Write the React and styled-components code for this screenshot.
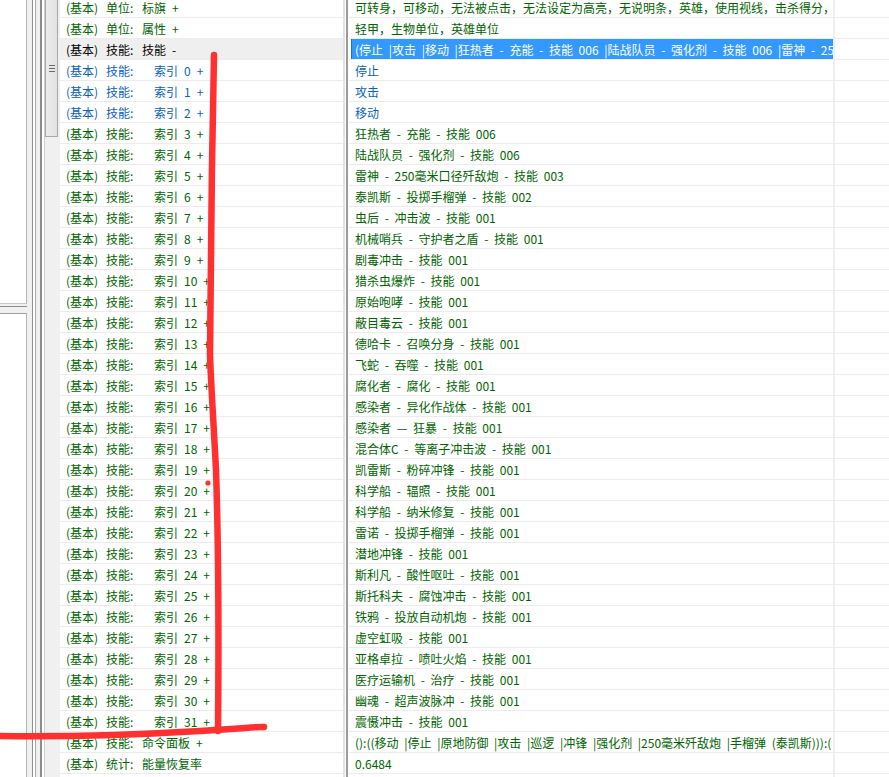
import React from 'react';
import styled, { createGlobalStyle } from 'styled-components';

const GlobalStyle = createGlobalStyle`
  html, body {
    margin: 0;
    padding: 0;
    background: #fff;
  }
  body {
    font-family: "Noto Sans CJK SC", "Noto Sans", sans-serif;
    font-size: 12px;
    overflow: hidden;
  }
`;

const tones = {
  green: '#006400',
  blue: '#0a5fc0',
  black: '#000000',
  white: '#ffffff',
};

const Window = styled.div`
  position: relative;
  display: flex;
  width: 889px;
  height: 777px;
  overflow: hidden;
  background: #fff;
`;

// left dock: two stacked panes, a splitter, the tree's scrollbar
const Sidebar = styled.div`
  display: flex;
  flex: none;
  width: 60px;
  height: 100%;
`;

const PaneStack = styled.div`
  display: flex;
  flex-direction: column;
  width: 27px;
  background: #f0f0f0;
`;

const Pane = styled.div`
  box-sizing: border-box;
  height: ${p => p.$height}px;
  background: #fff;
  border-right: 1px solid #b4b4b4;
  border-top: ${p => (p.$top ? '1px solid #a0a0a0' : 'none')};
  border-bottom: ${p => (p.$bottom ? '1px solid #c8c8c8' : 'none')};
  flex: ${p => (p.$grow ? 1 : 'none')};
`;

const PaneGap = styled.div`
  height: 9px;
  background: linear-gradient(to bottom, #f0f0f0 0 2px, #8c8c8c 2px 3px, #f0f0f0 3px 9px);
`;

const Splitter = styled.div`
  width: 17px;
  background: linear-gradient(
    to right,
    #f0f0f0 0 5px,
    #8f8f8f 5px 6px,
    #ffffff 6px 8px,
    #a8a8a8 8px 9px,
    #f0f0f0 9px 13px,
    #8c8c8c 13px 15px,
    #ffffff 15px 17px
  );
`;

const Scrollbar = styled.div`
  display: flex;
  flex-direction: column;
  box-sizing: border-box;
  width: 16px;
  background: #f0f0f0;
  border-left: 1px solid #d0d0d0;
`;

const Thumb = styled.div`
  box-sizing: border-box;
  display: flex;
  flex-direction: column;
  align-items: center;
  justify-content: center;
  gap: 2px;
  width: 13px;
  height: 137px;
  background: linear-gradient(to right, #ececec, #e2e2e2);
  border: 1px solid #a8a8a8;
  border-top: none;
`;

const Grip = styled.span`
  width: 6px;
  height: 1px;
  background: #6a6a6a;
`;

// the property grid, scrolled a few pixels past its first row
const Grid = styled.div`
  display: flex;
  flex-direction: column;
  flex: 1;
  margin-top: -3px;
`;

const Row = styled.div`
  display: flex;
  flex: none;
  height: 21px;
`;

const NameCell = styled.div`
  box-sizing: border-box;
  display: flex;
  align-items: center;
  width: 283px;
  padding-left: 6px;
  border-bottom: 1px solid #ececec;
  background: ${p => (p.$active ? '#efefef' : 'transparent')};
  color: ${p => tones[p.$tone]};
  white-space: pre;
  overflow: hidden;
`;

const Prefix = styled.span`
  width: 40px;
  flex: none;
`;

const Category = styled.span`
  width: 36px;
  flex: none;
`;

const Label = styled.span`
  margin-left: ${p => (p.$indent ? 12 : 0)}px;
`;

const Num = styled.span`
  margin-left: 6px;
`;

const Sign = styled.span`
  margin-left: 6px;
`;

const ColumnSplit = styled.div`
  width: 6px;
  flex: none;
  background: linear-gradient(
    to right,
    #e2e2e2 0 2px,
    #ffffff 2px 3px,
    #9a9a9a 3px 5px,
    #ffffff 5px 6px
  );
`;

const ValueCell = styled.div`
  box-sizing: border-box;
  display: flex;
  width: 484px;
  padding-left: 2px;
  border-bottom: 1px solid #ececec;
  overflow: hidden;
`;

const Value = styled.div`
  flex: 1;
  display: flex;
  align-items: center;
  padding-left: 3px;
  border-left: 1px solid ${p => (p.$selected ? '#1b6fd6' : 'transparent')};
  background: ${p => (p.$selected ? '#3399ff' : 'transparent')};
  color: ${p => tones[p.$tone]};
  white-space: pre;
  word-spacing: 3px;
  overflow: hidden;
`;

const SpareCell = styled.div`
  flex: 1;
  border-left: 2px solid #efefef;
  border-bottom: 1px solid #ececec;
`;

const Annotation = styled.svg`
  position: absolute;
  left: 0;
  top: 0;
  pointer-events: none;
`;

const names = [
  { cat: '单位:', label: '标旗', sign: '+', tone: 'green' },
  { cat: '单位:', label: '属性', sign: '+', tone: 'green' },
  { cat: '技能:', label: '技能', sign: '-', tone: 'black', active: true },
  ...Array.from({ length: 32 }, (_, i) => ({
    cat: '技能:',
    label: '索引',
    num: i,
    sign: '+',
    tone: i < 3 ? 'blue' : 'green',
    indent: true,
  })),
  { cat: '技能:', label: '命令面板', sign: '+', tone: 'green' },
  { cat: '统计:', label: '能量恢复率', sign: '', tone: 'green' },
];

const values = [
  { text: '可转身，可移动，无法被点击，无法设定为高亮，无说明条，英雄，使用视线，击杀得分，', tone: 'green' },
  { text: '轻甲，生物单位，英雄单位', tone: 'green' },
  {
    text: '(停止 |攻击 |移动 |狂热者 - 充能 - 技能 006 |陆战队员 - 强化剂 - 技能 006 |雷神 - 250毫米口径歼敌炮 - 技能 003)',
    tone: 'white',
    selected: true,
  },
  { text: '停止', tone: 'blue' },
  { text: '攻击', tone: 'blue' },
  { text: '移动', tone: 'blue' },
  { text: '狂热者 - 充能 - 技能 006', tone: 'green' },
  { text: '陆战队员 - 强化剂 - 技能 006', tone: 'green' },
  { text: '雷神 - 250毫米口径歼敌炮 - 技能 003', tone: 'green' },
  { text: '泰凯斯 - 投掷手榴弹 - 技能 002', tone: 'green' },
  { text: '虫后 - 冲击波 - 技能 001', tone: 'green' },
  { text: '机械哨兵 - 守护者之盾 - 技能 001', tone: 'green' },
  { text: '剧毒冲击 - 技能 001', tone: 'green' },
  { text: '猎杀虫爆炸 - 技能 001', tone: 'green' },
  { text: '原始咆哮 - 技能 001', tone: 'green' },
  { text: '蔽目毒云 - 技能 001', tone: 'green' },
  { text: '德哈卡 - 召唤分身 - 技能 001', tone: 'green' },
  { text: '飞蛇 - 吞噬 - 技能 001', tone: 'green' },
  { text: '腐化者 - 腐化 - 技能 001', tone: 'green' },
  { text: '感染者 - 异化作战体 - 技能 001', tone: 'green' },
  { text: '感染者 — 狂暴 - 技能 001', tone: 'green' },
  { text: '混合体C - 等离子冲击波 - 技能 001', tone: 'green' },
  { text: '凯雷斯 - 粉碎冲锋 - 技能 001', tone: 'green' },
  { text: '科学船 - 辐照 - 技能 001', tone: 'green' },
  { text: '科学船 - 纳米修复 - 技能 001', tone: 'green' },
  { text: '雷诺 - 投掷手榴弹 - 技能 001', tone: 'green' },
  { text: '潜地冲锋 - 技能 001', tone: 'green' },
  { text: '斯利凡 - 酸性呕吐 - 技能 001', tone: 'green' },
  { text: '斯托科夫 - 腐蚀冲击 - 技能 001', tone: 'green' },
  { text: '铁鸦 - 投放自动机炮 - 技能 001', tone: 'green' },
  { text: '虚空虹吸 - 技能 001', tone: 'green' },
  { text: '亚格卓拉 - 喷吐火焰 - 技能 001', tone: 'green' },
  { text: '医疗运输机 - 治疗 - 技能 001', tone: 'green' },
  { text: '幽魂 - 超声波脉冲 - 技能 001', tone: 'green' },
  { text: '震慑冲击 - 技能 001', tone: 'green' },
  { text: '():((移动 |停止 |原地防御 |攻击 |巡逻 |冲锋 |强化剂 |250毫米歼敌炮 |手榴弹 (泰凯斯))):(', tone: 'green' },
  { text: '0.6484', tone: 'green' },
];

function App() {
  return (
    <Window>
      <GlobalStyle />
      <Sidebar>
        <PaneStack>
          <Pane $height={304} $bottom />
          <PaneGap />
          <Pane $grow $top />
        </PaneStack>
        <Splitter />
        <Scrollbar>
          <Thumb>
            <Grip />
            <Grip />
            <Grip />
          </Thumb>
        </Scrollbar>
      </Sidebar>

      <Grid>
        {names.map((n, i) => {
          const v = values[i];
          return (
            <Row key={i}>
              <NameCell $tone={n.tone} $active={n.active}>
                <Prefix>(基本)</Prefix>
                <Category>{n.cat}</Category>
                <Label $indent={n.indent}>{n.label}</Label>
                {n.num !== undefined && <Num>{n.num}</Num>}
                {n.sign && <Sign>{n.sign}</Sign>}
              </NameCell>
              <ColumnSplit />
              <ValueCell>
                <Value $tone={v.tone} $selected={v.selected}>{v.text}</Value>
              </ValueCell>
              <SpareCell />
            </Row>
          );
        })}
        <Row>
          <NameCell $tone="green" />
          <ColumnSplit />
          <ValueCell />
          <SpareCell />
        </Row>
      </Grid>

      {/* red marker strokes drawn over the screenshot */}
      <Annotation width="889" height="777" viewBox="0 0 889 777">
        <g fill="none" stroke="#ff3030" strokeWidth="6.5" strokeLinecap="round" strokeLinejoin="round">
          <path d="M214 55 C 212 150, 210 290, 210 355 C 211 385, 214 430, 216 470 C 218 530, 219 620, 218 731" />
          <path d="M-4 736 C 70 737, 150 734, 200 731 S 252 727, 264 727" />
        </g>
        <circle cx="208" cy="483" r="2.6" fill="#ff3030" />
      </Annotation>
    </Window>
  );
}

export default App;
